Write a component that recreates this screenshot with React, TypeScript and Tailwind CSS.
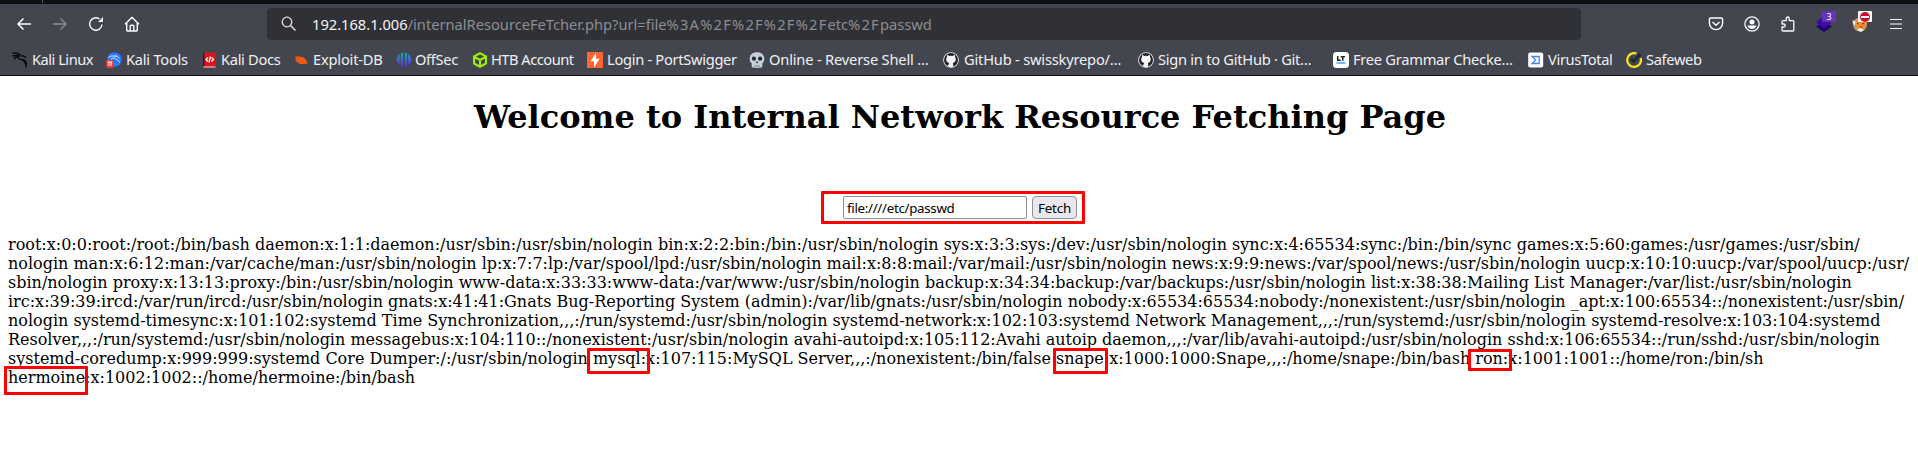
import React from 'react';

const Svg = ({ children, s = 16 }: { children: React.ReactNode; s?: number }) => (
  <svg width={s} height={s} viewBox="0 0 16 16" fill="none" className="shrink-0">{children}</svg>
);

const Github = () => (
  <Svg>
    <circle cx="8" cy="8" r="7.8" fill="#f4f4f4" />
    <circle cx="8" cy="8" r="7" fill="#1f2328" />
    <path d="M5.8 15V12.8C4.6 12.9 4 12.4 3.6 11.5M5.8 15V12c0-.5.2-.9.5-1.1C4.300 10.600 3.200 9.500 3.200 7.200c0-.8.3-1.500.8-2.100-.2-.7-.1-1.400.1-2 .8 0 1.500.4 2.100.9a7 7 0 0 1 3.600 0c.6-.5 1.300-.9 2.100-.9.2.6.3 1.300.1 2 .5.6.8 1.300.8 2.100 0 2.300-1.100 3.400-3.100 3.700.3.200.5.600.5 1.100v3z" fill="#f4f4f4" />
  </Svg>
);

const bookmarks: { label: string; item: string; text: string; icon: React.ReactNode }[] = [
  { label: 'Kali Linux', item: 'w-[94px]', text: 'ml-1 tracking-[-0.5px]', icon: (
    <Svg><path d="M.5 1.200c3-.4 6 .2 8 1.800M.5 4c2.500-.9 5-.5 7-.6M2 7c1.500-1.800 3.500-2.600 5.500-2.500M7.500 3c-2 2.500-1 4.500 2 4.600 3 .1 4.500 1.400 5 4.400M9 4c2.500-.5 4 .2 4.800 2M9.500 7.700c3 .6 4.500 3.500 4.800 7.800" stroke="#08090a" strokeWidth="1.500" /></Svg>) },
  { label: 'Kali Tools', item: 'w-[96px]', text: 'ml-1 tracking-[-0.25px]', icon: (
    <Svg><circle cx="8.500" cy="7.500" r="7.300" fill="#2777ff" /><path d="M2.500 5.500c3-2.300 5.500-1.700 7.500-.2M5 7c2-1.500 4-1 4.500 0s3 .3 4.200 3.500M8.500 3.500c2 .3 3.500 1 5 3" stroke="#e8f1ff" strokeWidth="1" /><rect x="0" y="8" width="8" height="8" rx="2.500" fill="#ec3b3b" /><path d="M1.700 10h4.600M3 10v4M5.200 10v4" stroke="#fff" strokeWidth="1" /></Svg>) },
  { label: 'Kali Docs', item: 'w-[91px]', text: 'ml-[3px] tracking-[-0.33px]', icon: (
    <Svg><path d="M1 .5h12.500v15H1z" fill="#db151b" /><path d="M1 .5h1.300v13L1 14.800z" fill="#17194a" /><path d="M1.500 15h12" stroke="#ddd" /><path d="M6 5.500 4 7.500l2 2M9.500 5.500l2 2-2 2M8.500 4.500 7 10.500" stroke="#fff" strokeWidth="1.300" /></Svg>) },
  { label: 'Exploit-DB', item: 'w-[103px]', text: 'ml-1 tracking-[-0.2px]', icon: (
    <Svg><path d="M1.500 3.200 4.700 5l1-1.600L6.600 5c3-.7 6 1.100 6.800 4.200l2.100.8-1.700.5 1.300 2-2.200-1.300-.5 1.600-1.200-1c-2 1-4.500.3-6-1.400l-2 .2 1-1.200L1.500 8.500l2-.4L1 6.200l2.600.4z" fill="#ed5b15" /></Svg>) },
  { label: 'OffSec', item: 'w-[76px]', text: 'ml-[3px] tracking-[-0.33px]', icon: (
    <Svg><defs><linearGradient id="off" gradientUnits="userSpaceOnUse" x1="0" y1="0" x2="0" y2="16"><stop stopColor="#16aeb6" /><stop offset="1" stopColor="#6821cf" /></linearGradient></defs><path d="M3.700 2C-.5 5-.5 10.500 3.700 13.500zM7.100.5v15C5.500 14.800 4.700 14 4.700 14V1.500zM8.700.5v15c1.300-.7 2.400-1.500 2.400-1.500V1.500zM12.100 2c4.200 3 4.200 8.500 0 11.500z" fill="url(#off)" /></Svg>) },
  { label: 'HTB Account', item: 'w-[115px]', text: 'ml-[3px] tracking-[-0.5px]', icon: (
    <Svg><path d="m8 1.200 6 3.300v7L8 14.800l-6-3.300v-7zM2.200 4.800 8 8l5.800-3.200M8 8v6.500" stroke="#9fef00" strokeWidth="2" strokeLinejoin="round" /></Svg>) },
  { label: 'Login - PortSwigger', item: 'w-[162px]', text: 'ml-1 tracking-[-0.3px]', icon: (
    <Svg><path fill="#ff6633" d="M0 0h16v16H0z" /><path d="M9 1v5.700h3.500L7 15.500V9.300H3.500z" fill="#fff" /></Svg>) },
  { label: 'Online - Reverse Shell …', item: 'w-[194px]', text: 'ml-1 tracking-[-0.18px]', icon: (
    <Svg><path d="M8 .3c4.700 0 7.300 2.700 7.300 6.500 0 2.200-.6 3.500-2 4.400v3.300c0 1.200-3 1.500-5.300 1.500s-5.300-.3-5.300-1.500v-3.300C1.300 10.300.7 9 .7 6.800.7 3 3.300.3 8 .3" fill="#c5d0dc" /><circle cx="4.900" cy="6.700" r="2.100" fill="#25282d" /><circle cx="11.100" cy="6.700" r="2.100" fill="#25282d" /><path d="m8 9 1 1.800H7zM6 13v2.500M8 13v2.500M10 13v2.500" fill="#25282d" stroke="#53606d" strokeWidth=".7" /></Svg>) },
  { label: 'GitHub - swisskyrepo/…', item: 'w-[195px]', text: 'ml-[5px] tracking-[-0.2px]', icon: <Github /> },
  { label: 'Sign in to GitHub · Git…', item: 'w-[195px]', text: 'ml-1 tracking-[-0.27px]', icon: <Github /> },
  { label: 'Free Grammar Checke…', item: 'w-[195px]', text: 'ml-1 tracking-[-0.27px]', icon: (
    <Svg><rect width="16" height="16" rx="3.500" fill="#fff" /><path d="M4.700 4v4.200h3M7.700 4.700h4.200M9.800 4.700v4" stroke="#23252b" strokeWidth="1.500" /><path d="m3.500 11.500 1.500-1 1.500 1 1.500-1 1.500 1 1.500-1 1.500 1" stroke="#45a1fc" strokeWidth="1.300" /></Svg>) },
  { label: 'VirusTotal', item: 'w-[98px]', text: 'ml-1 tracking-[-0.35px]', icon: (
    <Svg><rect x=".2" y=".5" width="15" height="15" rx="2" fill="#fff" /><path d="M4.200 4.500h7v7h-7l3.500-3.500z" stroke="#4384ef" strokeWidth="1.300" /></Svg>) },
  { label: 'Safeweb', item: 'w-[90px]', text: 'ml-1 tracking-[-0.35px]', icon: (
    <Svg><path d="M10.500 1.500A6.900 6.900 0 1 0 14.700 6" stroke="#fde51b" strokeWidth="2.200" /><path d="m5 7 2.500 2.500L14.500 2" stroke="#25282d" strokeWidth="2.600" /></Svg>) },
];

const lines = [
  'root:x:0:0:root:/root:/bin/bash daemon:x:1:1:daemon:/usr/sbin:/usr/sbin/nologin bin:x:2:2:bin:/bin:/usr/sbin/nologin sys:x:3:3:sys:/dev:/usr/sbin/nologin sync:x:4:65534:sync:/bin:/bin/sync games:x:5:60:games:/usr/games:/usr/sbin/',
  'nologin man:x:6:12:man:/var/cache/man:/usr/sbin/nologin lp:x:7:7:lp:/var/spool/lpd:/usr/sbin/nologin mail:x:8:8:mail:/var/mail:/usr/sbin/nologin news:x:9:9:news:/var/spool/news:/usr/sbin/nologin uucp:x:10:10:uucp:/var/spool/uucp:/usr/',
  'sbin/nologin proxy:x:13:13:proxy:/bin:/usr/sbin/nologin www-data:x:33:33:www-data:/var/www:/usr/sbin/nologin backup:x:34:34:backup:/var/backups:/usr/sbin/nologin list:x:38:38:Mailing List Manager:/var/list:/usr/sbin/nologin',
  'irc:x:39:39:ircd:/var/run/ircd:/usr/sbin/nologin gnats:x:41:41:Gnats Bug-Reporting System (admin):/var/lib/gnats:/usr/sbin/nologin nobody:x:65534:65534:nobody:/nonexistent:/usr/sbin/nologin _apt:x:100:65534::/nonexistent:/usr/sbin/',
  'nologin systemd-timesync:x:101:102:systemd Time Synchronization,,,:/run/systemd:/usr/sbin/nologin systemd-network:x:102:103:systemd Network Management,,,:/run/systemd:/usr/sbin/nologin systemd-resolve:x:103:104:systemd',
  'Resolver,,,:/run/systemd:/usr/sbin/nologin messagebus:x:104:110::/nonexistent:/usr/sbin/nologin avahi-autoipd:x:105:112:Avahi autoip daemon,,,:/var/lib/avahi-autoipd:/usr/sbin/nologin sshd:x:106:65534::/run/sshd:/usr/sbin/nologin',
  'systemd-coredump:x:999:999:systemd Core Dumper:/:/usr/sbin/nologin mysql:x:107:115:MySQL Server,,,:/nonexistent:/bin/false snape:x:1000:1000:Snape,,,:/home/snape:/bin/bash ron:x:1001:1001::/home/ron:/bin/sh',
  'hermoine:x:1002:1002::/home/hermoine:/bin/bash',
];

const marks = [
  'left-[821px] top-[191px] h-[33px] w-[264px]',
  'left-[587px] top-[348px] h-[26px] w-[63px]',
  'left-[1053px] top-[348px] h-[26px] w-[55px]',
  'left-[1468px] top-[349px] h-[22px] w-[44px]',
  'left-[4px] top-[366px] h-[29px] w-[84px]',
];

export default function App() {
  return (
    <div className="relative h-[463px] w-[1918px] overflow-hidden bg-white">
      <div className="h-1 bg-[#0f1014] pl-[42px]"><div className="h-[3px] w-px bg-[#5b5c63]" /></div>
      <header className="h-[72px] border-b border-[#0c0814] bg-[#44464f] font-['Noto_Sans',sans-serif] text-[#f0f0f3]">
        <div className="flex h-10 items-center pl-4">
          <div className="flex w-[251px] gap-5">
            <Svg><path d="M15 8H2M7.500 2.500 2 8l5.500 5.500" stroke="#fbfbfe" strokeWidth="1.500" /></Svg>
            <Svg><path d="M1 8h13M8.500 2.500 14 8l-5.500 5.500" stroke="#8c8d94" strokeWidth="1.300" /></Svg>
            <Svg><path d="M14 8.500A6.200 6.200 0 1 1 11.500 3" stroke="#fbfbfe" strokeWidth="1.400" /><path d="M15 1v5h-5z" fill="#fbfbfe" /></Svg>
            <Svg><path d="M1 8.200 8 1.300l7 6.900M2.700 7v7.300c0 .5.200.7.700.7h9.200c.5 0 .7-.2.7-.7V7M6.200 14.500V10c0-.5.300-.8.800-.8h2c.5 0 .8.300.8.800v4.500" stroke="#fbfbfe" strokeWidth="1.400" strokeLinejoin="round" /></Svg>
          </div>
          <div className="flex h-8 w-[1314px] items-center rounded bg-[#303136] pl-[14px]">
            <Svg><circle cx="6" cy="6" r="4.800" stroke="#e4e4e7" strokeWidth="1.300" /><path d="m9.500 9.500 5 5" stroke="#e4e4e7" strokeWidth="1.400" /></Svg>
            <span className="ml-[15px] whitespace-pre text-[14.67px] leading-5 text-[#8d8e92]"><span className="text-[#f4f4f7]">192.168.1.006</span>/internalResourceFeTcher.php?url=file<span className="tracking-[1.22px]">%3A%2F%2F%2F%2F</span>etc<span className="tracking-[1.22px]">%2F</span>passwd</span>
          </div>
          <div className="ml-[127px] flex gap-5">
            <Svg><path d="M2.500 2h11c.7 0 1.100.4 1.100 1.100V7A6.600 6.600 0 0 1 1.400 7V3.100C1.400 2.400 1.800 2 2.500 2ZM4.500 6 8 9.300 11.500 6" stroke="#fbfbfe" strokeWidth="1.400" strokeLinejoin="round" /></Svg>
            <Svg><circle cx="8" cy="8" r="7.100" stroke="#fbfbfe" strokeWidth="1.300" /><circle cx="8" cy="6" r="2.500" fill="#fbfbfe" /><path d="M3.500 9.500h9c-.5 2.200-2.300 3.500-4.500 3.500S4 11.700 3.500 9.500" fill="#fbfbfe" /></Svg>
            <Svg><path d="M2 8V5.500c0-.6.300-.9.900-.9h3.300V2.500a1.500 1.500 0 0 1 3 0v2.100h3.700c.6 0 .9.300.9.900v8.600c0 .6-.3.900-.9.900H2.900c-.6 0-.9-.3-.9-.9V11h1.800a1.500 1.500 0 0 0 0-3z" stroke="#fbfbfe" strokeWidth="1.300" strokeLinejoin="round" /></Svg>
            <div className="relative h-4 w-4">
              <Svg><path d="m8 5.500 8 5-8 5.500-8-5.500z" fill="#1c0070" /><path d="m8 0 8 6-8 6.500L0 6z" fill="#4208a5" /></Svg>
              <span className="absolute -top-[5px] left-[6px] h-[11px] w-[14px] rounded-[1px] bg-[#6634bb] text-center text-[9px] leading-[11px] text-white">3</span>
            </div>
            <div className="relative h-4 w-4">
              <Svg><circle cx="8" cy="8.500" r="7" fill="#aaa39b" /><path d="m.5 4.500 3 .3L7 3l5 2 3-1-.8 6.500c-1 3-3 4-5.700 4.200C5 14.700 3 12.500 2.500 9z" fill="#f18a2a" /><path d="m.5 4.500 3 1-.5 4-2-2zM5 14l3-2.500L12 14l-3 2z" fill="#f5eee6" /><path d="m5 7 2 1.200M12 7l-2 1.200M7.500 11h3" stroke="#5c3a20" /></Svg>
              <span className="absolute -top-[5px] left-[6px] flex h-[11px] w-[14px] items-center justify-center rounded-[1px] bg-white"><span className="flex h-[10px] w-[10px] items-center justify-center rounded-full bg-[#c8102e]"><span className="h-[2px] w-2 bg-white" /></span></span>
            </div>
            <Svg><path d="M2 3.500h12M2 8h12M2 12.500h12" stroke="#fbfbfe" strokeWidth="1.200" /></Svg>
          </div>
        </div>
        <nav className="flex h-8 items-center pl-3 text-[14.67px] leading-5">
          {bookmarks.map((b) => (
            <div key={b.label} className={`flex shrink-0 items-center whitespace-nowrap ${b.item}`}>
              {b.icon}
              <span className={`-mt-0.5 ${b.text}`}>{b.label}</span>
            </div>
          ))}
        </nav>
      </header>
      <main className="px-2 font-['DejaVu_Serif',serif] text-black">
        <h1 className="pt-[22px] pl-[2px] text-center text-[32px] leading-[38px] font-bold">Welcome to Internal Network Resource Fetching Page</h1>
        <form className="mt-[60px] flex h-[23px] gap-[5px] pl-[835px] font-['Noto_Sans',sans-serif] text-[13.33px]">
          <input readOnly defaultValue="file:////etc/passwd" className="h-[23px] w-[184px] rounded-[2px] border border-[#8f8f9d] bg-white px-[3px] pt-px tracking-[-0.3px] outline-none" />
          <button type="button" className="h-[23px] w-[45px] rounded-[4px] border border-[#8f8f9d] bg-[#e9e9ed] pt-px leading-[19px] tracking-[-0.2px]">Fetch</button>
        </form>
        <div className="mt-4 text-base leading-[19px] whitespace-pre">
          {lines.map((l) => <div key={l}>{l}</div>)}
        </div>
      </main>
      {marks.map((m) => <div key={m} className={`absolute rounded-[1px] border-[3px] border-[#fe0000] ${m}`} />)}
    </div>
  );
}
